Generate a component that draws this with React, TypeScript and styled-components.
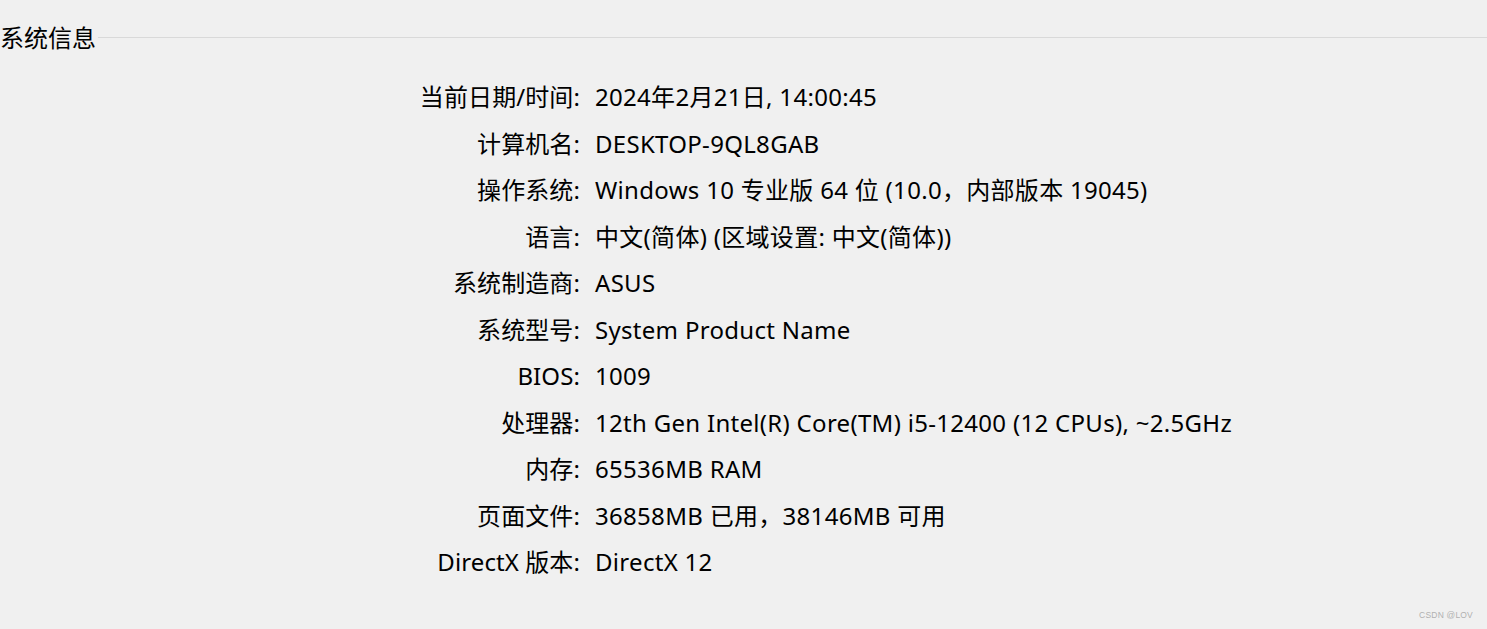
import React from "react";
import styled, { createGlobalStyle } from "styled-components";

const Global = createGlobalStyle`
  html, body { margin: 0; padding: 0; background: #f0f0f0; }
  body { font-family: "Noto Sans", "Noto Sans CJK SC", sans-serif; color: #000; }
`;

const Page = styled.div`
  width: 1487px;
  height: 629px;
  background: #f0f0f0;
  position: relative;
  overflow: hidden;
`;

const Header = styled.div`
  display: flex;
  align-items: flex-start;
  height: 76px;
`;

const Title = styled.div`
  font-size: 24px;
  line-height: 76px;
  height: 76px;
  padding-right: 2px;
  white-space: nowrap;
`;

const Rule = styled.div`
  flex: 1;
  height: 1px;
  background: #d9d9d9;
  margin-top: 37px;
`;

const Table = styled.div`
  display: grid;
  grid-template-columns: 580px auto;
  column-gap: 15px;
  margin-top: -2px;
`;

const Label = styled.div`
  text-align: right;
  font-size: 24px;
  line-height: 46.5px;
  letter-spacing: 0.1px;
  white-space: nowrap;
`;

const Value = styled.div`
  font-size: 24px;
  line-height: 46.5px;
  letter-spacing: 0.3px;
  white-space: nowrap;
`;

const Mark = styled.div`
  position: absolute;
  right: 14px;
  bottom: 9px;
  font-family: "Liberation Sans", Arial, sans-serif;
  font-size: 8.5px;
  color: #b0b0b0;
  letter-spacing: 0.2px;
`;

const rows: [string, string][] = [
  ["当前日期/时间:", "2024年2月21日, 14:00:45"],
  ["计算机名:", "DESKTOP-9QL8GAB"],
  ["操作系统:", "Windows 10 专业版 64 位 (10.0，内部版本 19045)"],
  ["语言:", "中文(简体) (区域设置: 中文(简体))"],
  ["系统制造商:", "ASUS"],
  ["系统型号:", "System Product Name"],
  ["BIOS:", "1009"],
  ["处理器:", "12th Gen Intel(R) Core(TM) i5-12400 (12 CPUs), ~2.5GHz"],
  ["内存:", "65536MB RAM"],
  ["页面文件:", "36858MB 已用，38146MB 可用"],
  ["DirectX 版本:", "DirectX 12"],
];

export default function App() {
  return (
    <Page>
      <Global />
      <Header>
        <Title>系统信息</Title>
        <Rule />
      </Header>
      <Table>
        {rows.map(([l, v]) => (
          <React.Fragment key={l}>
            <Label>{l}</Label>
            <Value>{v}</Value>
          </React.Fragment>
        ))}
      </Table>
      <Mark>CSDN @LOV</Mark>
    </Page>
  );
}
